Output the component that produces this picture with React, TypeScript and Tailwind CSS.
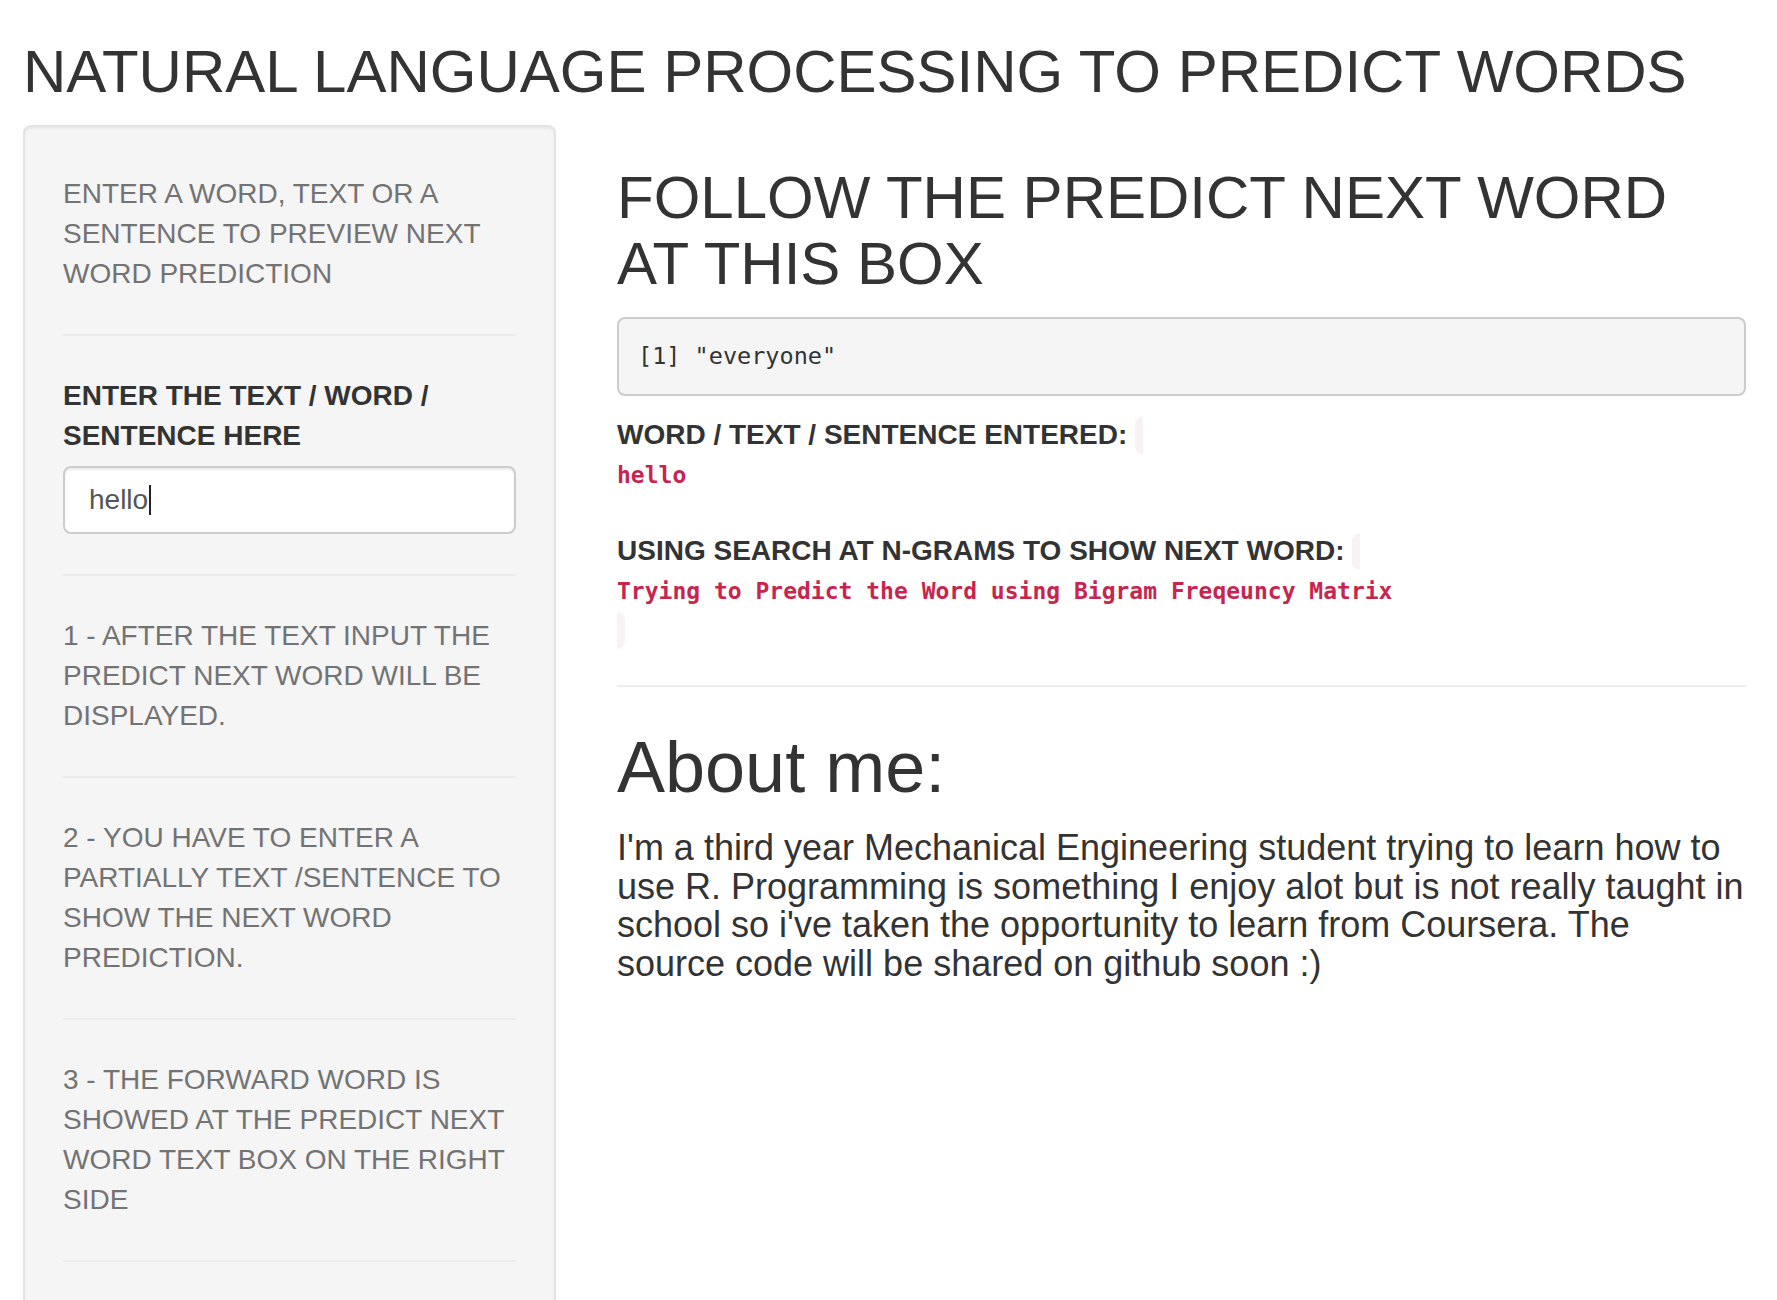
const steps = [
  '1 - AFTER THE TEXT INPUT THE PREDICT NEXT WORD WILL BE DISPLAYED.',
  '2 - YOU HAVE TO ENTER A PARTIALLY TEXT /SENTENCE TO SHOW THE NEXT WORD PREDICTION.',
  '3 - THE FORWARD WORD IS SHOWED AT THE PREDICT NEXT WORD TEXT BOX ON THE RIGHT SIDE',
];

function Rule() {
  return <div className="my-[40px] h-[2px] bg-[#ebebeb]" />;
}

function Sidebar() {
  return (
    <div className="w-[533px] shrink-0 rounded-[8px] border-2 border-[#e3e3e3] bg-[#f5f5f5] px-[38px] pt-[47px] pb-[38px] shadow-[inset_0_2px_2px_rgba(0,0,0,0.05)]">
      <p className="text-[#737373]">ENTER A WORD, TEXT OR A SENTENCE TO PREVIEW NEXT WORD PREDICTION</p>
      <Rule />
      <div className="font-bold text-[#333]">ENTER THE TEXT / WORD / SENTENCE HERE</div>
      {/* text input, drawn with its caret */}
      <div className="mt-[10px] flex h-[68px] items-center rounded-[8px] border-2 border-[#ccc] bg-white px-[24px] text-[#555] shadow-[inset_0_2px_2px_rgba(0,0,0,0.075)]">
        <span>hello</span>
        <span className="ml-[1px] h-[30px] w-[1.5px] bg-[#222]" />
      </div>
      {steps.map((s) => (
        <div key={s}>
          <Rule />
          <p className="text-[#737373]">{s}</p>
        </div>
      ))}
      <Rule />
    </div>
  );
}

function Output({ label, value, closing }: { label: string; value: string; closing?: boolean }) {
  return (
    <div className="font-bold text-[#333]">
      <div>
        {label}{' '}
        <span className="inline-block h-[37px] w-[8px] rounded-l-[8px] bg-[#f9f2f4] align-[-10px]" />
      </div>
      <div className="font-['DejaVu_Sans_Mono',monospace] text-[23px] text-[#c7254e]">{value}</div>
      {closing && (
        <div className="h-[40px] pt-[1px]">
          <div className="h-[37px] w-[8px] rounded-r-[8px] bg-[#f9f2f4]" />
        </div>
      )}
    </div>
  );
}

function MainPanel() {
  return (
    <div className="w-[1129px] shrink-0">
      <h2 className="mt-[40px] text-[60px] leading-[66px] font-normal text-[#333]">
        FOLLOW THE PREDICT NEXT WORD AT THIS BOX
      </h2>
      <pre className="mt-[20px] rounded-[8px] border-2 border-[#ccc] bg-[#f5f5f5] p-[19px] font-['DejaVu_Sans_Mono',monospace] text-[23.5px] leading-[37px] text-[#333]">
        [1] "everyone"
      </pre>
      <div className="mt-[19px]">
        <Output label="WORD / TEXT / SENTENCE ENTERED:" value="hello" />
      </div>
      <div className="mt-[36px]">
        <Output
          label="USING SEARCH AT N-GRAMS TO SHOW NEXT WORD:"
          value="Trying to Predict the Word using Bigram Freqeuncy Matrix"
          closing
        />
      </div>
      <div className="mt-[34px] h-[2px] bg-[#eee]" />
      <h1 className="mt-[41px] text-[72px] leading-[79px] font-normal text-[#333]">About me:</h1>
      <h4 className="mt-[22px] text-[36px] leading-[38.5px] font-normal text-[#333]">
        I'm a third year Mechanical Engineering student trying to learn how to use R. Programming is
        something I enjoy alot but is not really taught in school so i've taken the opportunity to
        learn from Coursera. The source code will be shared on github soon :)
      </h4>
    </div>
  );
}

export default function App() {
  return (
    <div className="h-[1300px] overflow-hidden bg-white pl-[23px] font-['Liberation_Sans',Arial,sans-serif] text-[28px] leading-[40px] text-[#333]">
      <h2 className="mt-[39px] mb-[20px] text-[60px] leading-[66px] font-normal">
        NATURAL LANGUAGE PROCESSING TO PREDICT WORDS
      </h2>
      <div className="flex gap-[61px]">
        <Sidebar />
        <MainPanel />
      </div>
    </div>
  );
}
